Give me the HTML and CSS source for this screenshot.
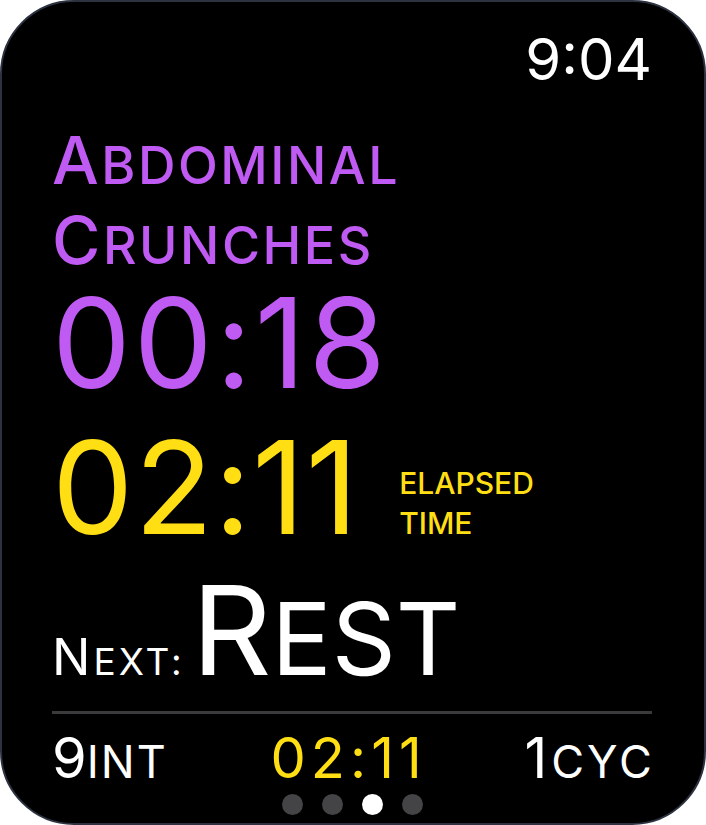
FILE: index.html
```html
<!DOCTYPE html>
<html>
<head>
<meta charset="utf-8">
<link rel="stylesheet" href="styles.css">
</head>
<body>
<div class="watch">
  <div class="clock">9:04</div>
  <div class="title"><span class="cap">A</span>bdominal<br><span class="cap">C</span>runches</div>
  <div class="interval">00:18</div>
  <div class="elapsed-row">
    <div class="elapsed">02:11</div>
    <div class="elapsed-label">ELAPSED<br>TIME</div>
  </div>
  <div class="next"><span class="next-label"><span class="cap">N</span>ext:</span><span class="next-name"><span class="cap">R</span>est</span></div>
  <div class="divider"></div>
  <div class="stats">
    <div class="stat"><span class="num">9</span><span class="unit">int</span></div>
    <div class="stat total">02:11</div>
    <div class="stat"><span class="num">1</span><span class="unit">cyc</span></div>
  </div>
  <div class="dots">
    <span class="dot"></span><span class="dot"></span><span class="dot active"></span><span class="dot"></span>
  </div>
</div>
</body>
</html>
```
FILE: styles.css
```css
html, body {
  margin: 0;
  padding: 0;
  background: #ffffff;
  width: 706px;
  height: 825px;
  overflow: hidden;
}
.watch {
  box-sizing: border-box;
  width: 706px;
  height: 825px;
  background: #000;
  border: 2px solid #2c3240;
  border-radius: 74px;
  padding: 28px 52px 0 50px;
  font-family: Inter, "Noto Sans", sans-serif;
  color: #fff;
  display: flex;
  flex-direction: column;
}
.clock {
  font-size: 58px;
  line-height: 58px;
  text-align: right;
  font-weight: 400;
}
.title {
  margin-top: 38px;
  font-size: 52px;
  line-height: 80px;
  font-weight: 500;
  color: #bf5af2;
  text-transform: uppercase;
  letter-spacing: 2.5px;
}
.title .cap {
  font-size: 66px;
  line-height: 0;
}
.interval {
  font-size: 125px;
  line-height: 113px;
  color: #bf5af2;
  font-weight: 400;
  letter-spacing: 3px;
}
.elapsed-row {
  margin-top: 24px;
  display: flex;
  align-items: last baseline;
}
.elapsed {
  font-size: 129px;
  line-height: 129px;
  color: #ffdf14;
  letter-spacing: 1px;
}
.elapsed-label {
  margin-left: 40px;
  font-size: 30px;
  line-height: 40px;
  color: #ffdf14;
  font-weight: 500;
}
.next {
  margin-top: 16px;
  font-size: 124px;
  line-height: 124px;
  white-space: nowrap;
}
.next-label {
  font-size: 37px;
  line-height: 0;
  text-transform: uppercase;
  font-weight: 400;
  letter-spacing: 3px;
}
.next-label .cap {
  font-size: 51px;
  line-height: 0;
}
.next-name {
  font-size: 100px;
  line-height: 0;
  text-transform: uppercase;
  font-weight: 400;
  margin-left: 7px;
}
.next-name .cap {
  font-size: 124px;
  line-height: 0;
}
.divider {
  margin-top: 19px;
  height: 3px;
  background: #3a3a3c;
}
.stats {
  margin-top: 16px;
  display: flex;
  justify-content: space-between;
  font-size: 56px;
  line-height: 56px;
}
.stat .unit {
  font-size: 45px;
  line-height: 0;
  text-transform: uppercase;
  letter-spacing: 2px;
}
.stat:last-child .unit {
  letter-spacing: 3px;
  margin-right: -3px;
}
.stat:last-child .num {
  margin-right: 4px;
}
.stat.total {
  color: #ffdf14;
  letter-spacing: 5px;
  margin-right: -5px;
}
.dots {
  margin-top: 8px;
  display: flex;
  justify-content: center;
  gap: 19px;
}
.dot {
  width: 21px;
  height: 21px;
  border-radius: 50%;
  background: #444446;
}
.dot.active {
  background: #fff;
}
```
